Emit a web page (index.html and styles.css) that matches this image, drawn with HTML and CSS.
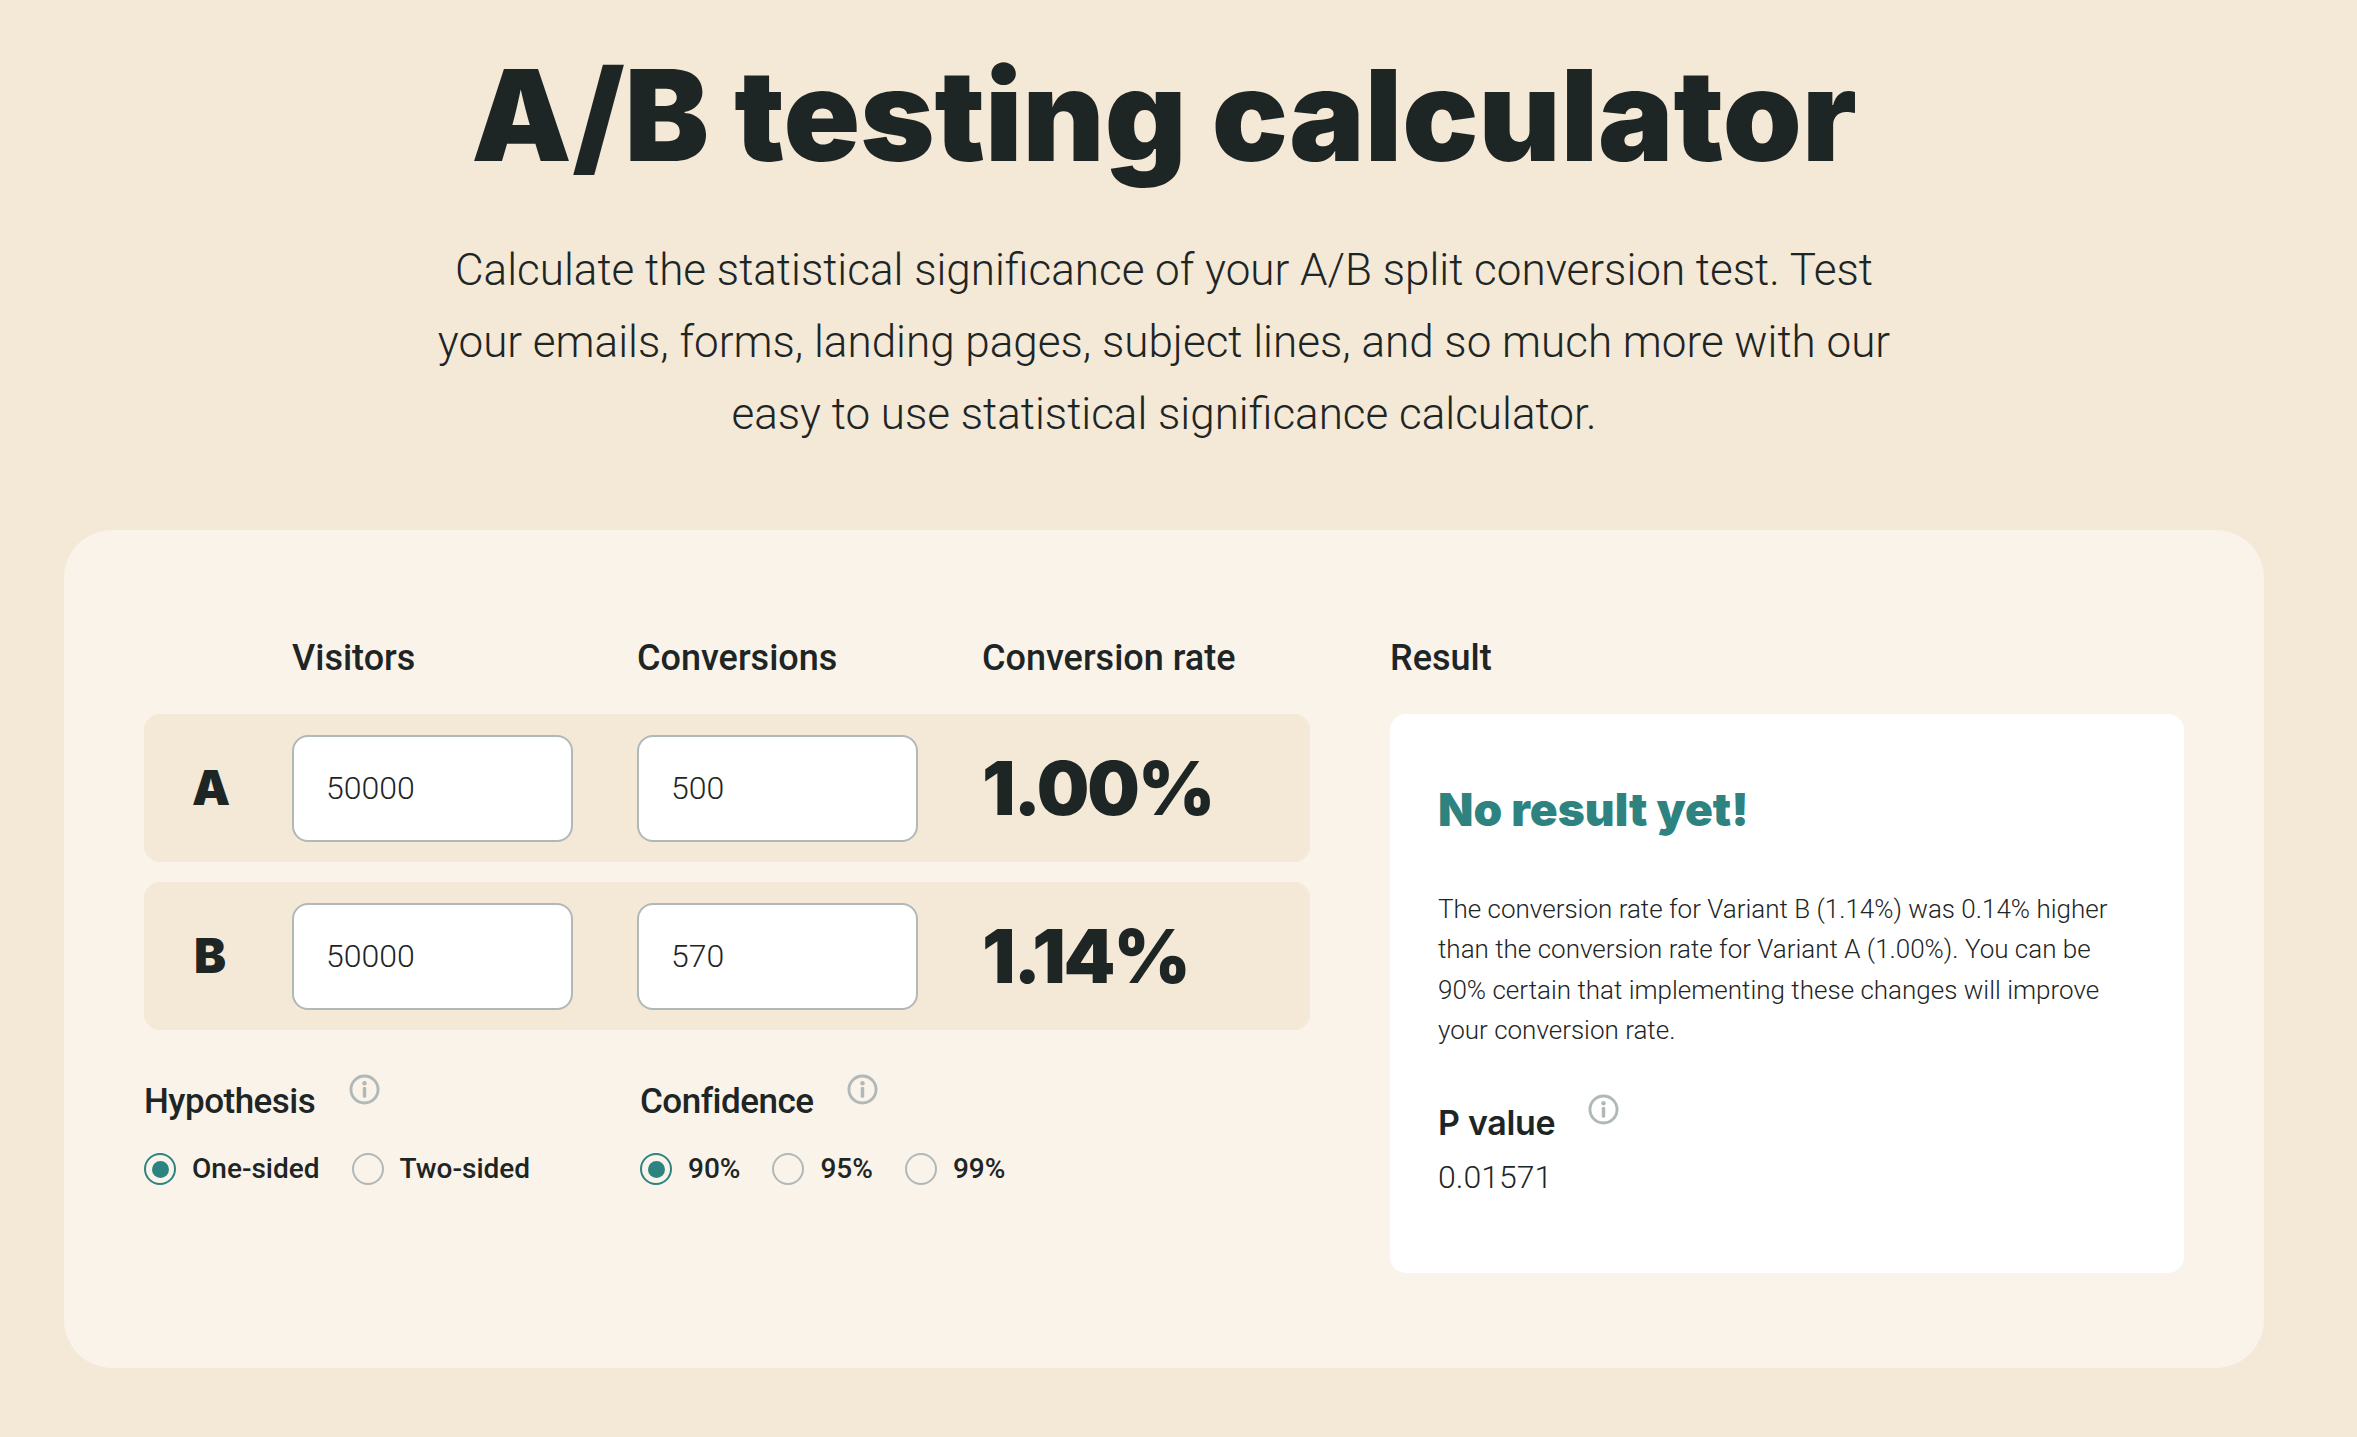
FILE: index.html
```html
<!DOCTYPE html>
<html lang="en">
<head>
<meta charset="utf-8">
<title>A/B testing calculator</title>
<link rel="stylesheet" href="styles.css">
</head>
<body>
<main class="page">
  <h1 class="title">A/B testing calculator</h1>
  <p class="intro">Calculate the statistical significance of your A/B split conversion test. Test<br>your emails, forms, landing pages, subject lines, and so much more with our<br>easy to use statistical significance calculator.</p>
  <section class="card">
    <div class="calc">
      <div class="heads">
        <span></span>
        <span class="head">Visitors</span>
        <span class="head">Conversions</span>
        <span class="head">Conversion rate</span>
      </div>
      <div class="row">
        <span class="variant">A</span>
        <input class="field" type="text" value="50000">
        <input class="field" type="text" value="500">
        <span class="rate">1.00%</span>
      </div>
      <div class="row">
        <span class="variant">B</span>
        <input class="field" type="text" value="50000">
        <input class="field" type="text" value="570">
        <span class="rate">1.14%</span>
      </div>
      <div class="options">
        <div class="group group-hyp">
          <div class="group-title"><span>Hypothesis</span>
            <svg class="info" viewBox="0 0 32 32"><circle cx="16" cy="16" r="14" fill="none" stroke="currentColor" stroke-width="3"/><circle cx="16" cy="9.6" r="2.3" fill="currentColor"/><rect x="14.2" y="13.4" width="3.6" height="11" rx="1.2" fill="currentColor"/></svg>
          </div>
          <div class="radios radios-hyp">
            <label class="opt"><span class="radio on"></span>One-sided</label>
            <label class="opt"><span class="radio"></span>Two-sided</label>
          </div>
        </div>
        <div class="group">
          <div class="group-title"><span>Confidence</span>
            <svg class="info" viewBox="0 0 32 32"><circle cx="16" cy="16" r="14" fill="none" stroke="currentColor" stroke-width="3"/><circle cx="16" cy="9.6" r="2.3" fill="currentColor"/><rect x="14.2" y="13.4" width="3.6" height="11" rx="1.2" fill="currentColor"/></svg>
          </div>
          <div class="radios radios-conf">
            <label class="opt"><span class="radio on"></span>90%</label>
            <label class="opt"><span class="radio"></span>95%</label>
            <label class="opt"><span class="radio"></span>99%</label>
          </div>
        </div>
      </div>
    </div>
    <div class="result">
      <div class="heads-result"><span class="head">Result</span></div>
      <div class="result-box">
        <h2 class="result-title">No result yet!</h2>
        <p class="result-text">The conversion rate for Variant B (1.14%) was 0.14% higher<br>than the conversion rate for Variant A (1.00%). You can be<br>90% certain that implementing these changes will improve<br>your conversion rate.</p>
        <div class="pvalue-head"><span>P value</span>
          <svg class="info" viewBox="0 0 32 32"><circle cx="16" cy="16" r="14" fill="none" stroke="currentColor" stroke-width="3"/><circle cx="16" cy="9.6" r="2.3" fill="currentColor"/><rect x="14.2" y="13.4" width="3.6" height="11" rx="1.2" fill="currentColor"/></svg>
        </div>
        <div class="pvalue">0.01571</div>
      </div>
    </div>
  </section>
</main>
</body>
</html>
```
FILE: styles.css
```css
* { box-sizing: border-box; }
html, body { margin: 0; padding: 0; }
body {
  background: #f4e8d6;
  color: #1e2525;
  font-family: Roboto, "Liberation Sans", sans-serif;
  height: 1437px;
  overflow: hidden;
}
.page { width: 2328px; padding-top: 40px; }
.title {
  margin: 0;
  text-align: center;
  font-family: Inter, "Liberation Sans", sans-serif;
  font-weight: 900;
  font-size: 126.5px;
  line-height: 150px;
}
.intro {
  margin: 43.5px 0 0;
  text-align: center;
  font-weight: 300;
  font-size: 44px;
  line-height: 72px;
}
.card {
  margin-top: 80.5px;
  margin-left: 64px;
  width: 2200px;
  height: 838px;
  background: #faf3ea;
  border-radius: 48px;
  padding: 80px;
  display: grid;
  grid-template-columns: 1166px 794px;
  column-gap: 80px;
}
.heads, .row {
  display: grid;
  grid-template-columns: 36px 281px 281px 1fr;
  column-gap: 64px;
  padding-left: 48px;
  align-items: center;
}
.heads { height: 104px; align-items: start; padding-top: 27px; }
.heads-result { height: 104px; padding-top: 27px; }
.head { font-weight: 500; font-size: 36px; line-height: 42px; }
.row {
  height: 148px;
  background: #f4e8d6;
  border-radius: 16px;
  margin-bottom: 20px;
}
.variant {
  font-family: Inter, sans-serif;
  font-weight: 900;
  font-size: 48px;
  line-height: 1;
  text-align: center;
}
.field {
  width: 281px;
  height: 107px;
  border: 2px solid #b0b8b8;
  border-radius: 16px;
  background: #fff;
  padding: 0 32px;
  font-family: Roboto, sans-serif;
  font-weight: 300;
  font-size: 32px;
  color: #1e2525;
  outline: none;
}
.rate {
  font-family: Inter, sans-serif;
  font-weight: 900;
  font-size: 74px;
  line-height: 1;
  letter-spacing: -2px;
}
.options { display: flex; margin-top: 43px; }
.group-hyp { width: 496px; }
.group-title {
  display: flex;
  align-items: flex-start;
  gap: 34px;
  font-weight: 500;
  font-size: 35px;
  line-height: 58px;
  letter-spacing: -0.5px;
}
.info { width: 31px; height: 31px; color: #b0b8b8; flex: none; margin-top: 1px; }
.radios { display: flex; margin-top: 22px; }
.opt {
  display: flex;
  align-items: center;
  gap: 16px;
  font-weight: 500;
  font-size: 28px;
  line-height: 32px;
}
.radios-hyp .opt { margin-right: 32px; }
.radios-conf .opt { margin-right: 32px; }
.radio {
  width: 32px;
  height: 32px;
  border-radius: 50%;
  border: 2px solid #b0b8b8;
  flex: none;
  display: flex;
  align-items: center;
  justify-content: center;
}
.radio.on { border-color: #2e8380; }
.radio.on::after {
  content: "";
  width: 17px;
  height: 17px;
  border-radius: 50%;
  background: #2e8380;
}
.result-box {
  height: 559px;
  background: #fff;
  border-radius: 16px;
  padding: 62px 48px 0;
}
.result-title {
  margin: 0;
  font-family: Inter, sans-serif;
  font-weight: 900;
  font-size: 46px;
  line-height: 66px;
  color: #2e8380;
}
.result-text {
  margin: 46.5px 0 0;
  font-weight: 300;
  font-size: 26px;
  line-height: 40.5px;
}
.pvalue-head {
  display: flex;
  align-items: flex-start;
  gap: 33px;
  margin-top: 42.5px;
  font-family: Inter, sans-serif;
  font-weight: 600;
  font-size: 34px;
  line-height: 60px;
  letter-spacing: -0.3px;
}
.pvalue { font-weight: 300; font-size: 32px; line-height: 48px; }
```
